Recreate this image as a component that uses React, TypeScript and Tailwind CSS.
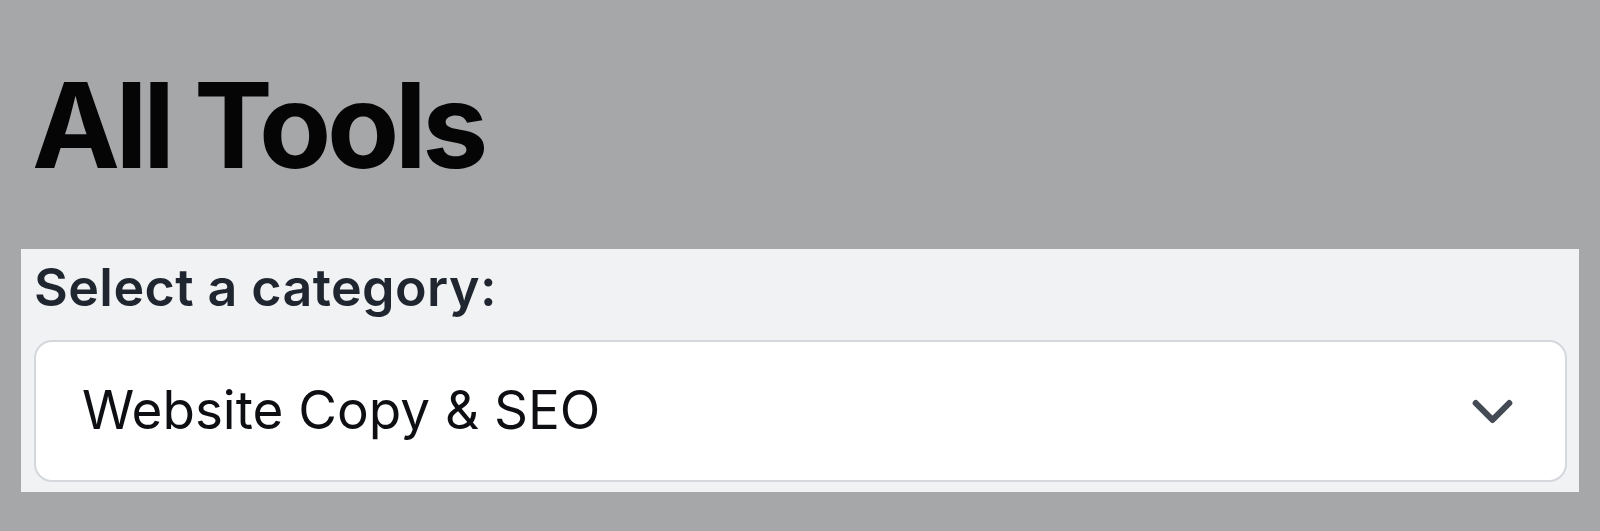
import React from "react";

export default function App() {
  return (
    <div
      className="w-full h-[531px] bg-[#a6a7a9] px-[21px] overflow-hidden"
      style={{ fontFamily: "Inter, 'Noto Sans', sans-serif" }}
    >
      <h1 className="pt-[65px] pl-[11px] text-[118px] leading-[120px] font-bold tracking-[-4.5px] text-[#050505]">
        All Tools
      </h1>
      <div className="mt-[64px] bg-[#f1f2f4] pl-[13px] pr-[12px] pt-[9px] pb-[10px]">
        <label className="block text-[52px] leading-[60px] font-semibold tracking-[0.4px] text-[#1f2630]">
          Select a category:
        </label>
        <div className="mt-[22px] flex h-[142px] items-center justify-between rounded-[18px] border-2 border-[#d4d7dc] bg-white pl-[46px] pr-[39px]">
          <span className="text-[53px] text-[#0d0f13]">Website Copy &amp; SEO</span>
          <svg
            width="67"
            height="67"
            viewBox="0 0 24 24"
            fill="none"
            stroke="#454b55"
            strokeWidth="2.2"
            strokeLinecap="round"
            strokeLinejoin="round"
          >
            <path d="m6 9 6 6 6-6" />
          </svg>
        </div>
      </div>
    </div>
  );
}
